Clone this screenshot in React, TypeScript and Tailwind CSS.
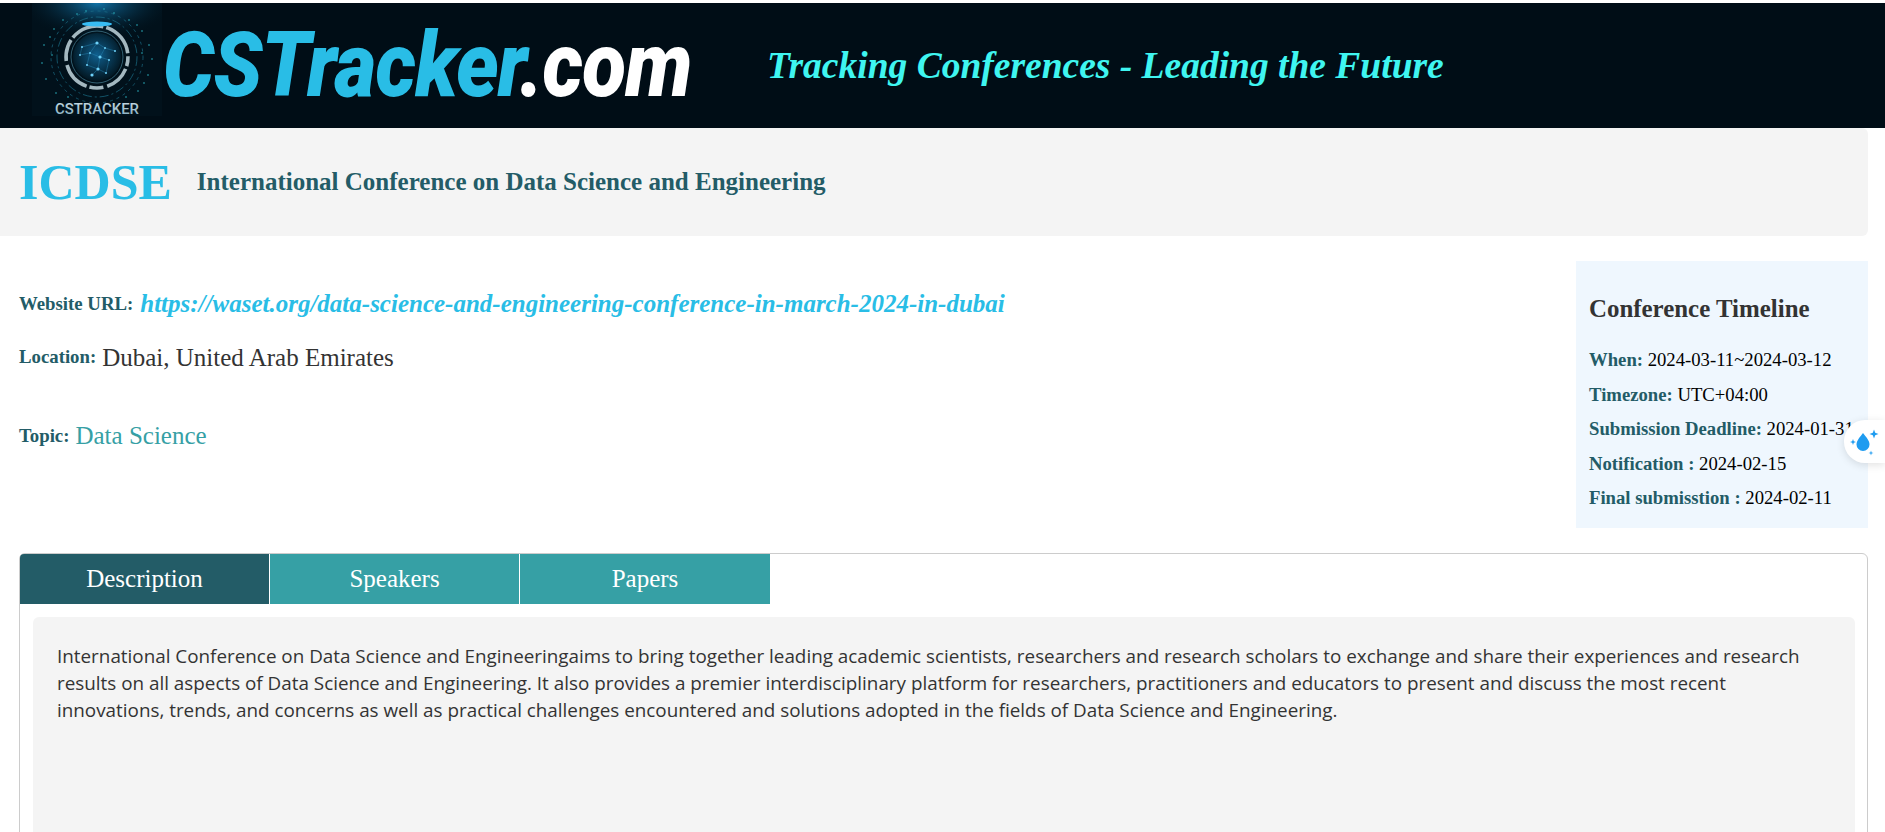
import React from "react";

const serif = "font-['Liberation_Serif',serif]";

const LogoMark = () => {
  const outerDots = [
    [22, 26], [31, 17], [45, 11], [82, 10], [97, 17], [110, 28], [117, 42], [12, 42], [10, 60], [14, 76], [24, 90], [106, 88], [116, 72], [120, 56],
    [18, 34], [105, 22], [112, 80], [20, 52], [110, 50], [36, 94], [94, 94], [54, 8], [72, 6],
  ];
  const nodes = [
    [65, 40], [73, 45], [58, 50], [68, 54], [77, 57], [55, 62], [66, 66], [48, 52], [83, 48], [60, 72], [74, 70], [50, 44],
  ];
  const links = [
    [0, 1], [0, 2], [2, 3], [1, 3], [3, 4], [2, 5], [3, 6], [5, 6], [2, 7], [1, 8], [6, 9], [6, 10], [4, 10], [7, 11], [0, 11],
  ];
  return (
    <svg width="130" height="113" viewBox="0 0 130 113" className="block shrink-0 overflow-visible">
      <defs>
        <radialGradient id="glow" cx="50%" cy="0%" r="60%">
          <stop offset="0%" stopColor="#1173a8" />
          <stop offset="100%" stopColor="#01121c" stopOpacity="0" />
        </radialGradient>
        <radialGradient id="globe" cx="50%" cy="45%" r="55%">
          <stop offset="0%" stopColor="#0f5f8e" />
          <stop offset="100%" stopColor="#021722" />
        </radialGradient>
        <linearGradient id="word" x1="0" y1="0" x2="0" y2="1">
          <stop offset="0%" stopColor="#c7dbe4" />
          <stop offset="100%" stopColor="#7fa8bb" />
        </linearGradient>
      </defs>
      <rect width="130" height="113" fill="#01111b" />
      <rect width="130" height="60" fill="url(#glow)" />
      <circle cx="65" cy="54" r="46" fill="none" stroke="#1b6d86" strokeWidth="0.7" strokeDasharray="3 4" />
      <circle cx="65" cy="54" r="40" fill="none" stroke="#1f7d99" strokeWidth="0.6" strokeDasharray="9 3 2 3" />
      <circle cx="65" cy="54" r="24" fill="url(#globe)" />
      {links.map(([a, b], i) => (
        <line key={i} x1={nodes[a][0]} y1={nodes[a][1]} x2={nodes[b][0]} y2={nodes[b][1]} stroke="#2a8fc0" strokeWidth="0.4" />
      ))}
      {nodes.map(([x, y], i) => (
        <circle key={i} cx={x} cy={y} r={i % 3 === 0 ? 1.6 : 1} fill="#6ed2fa" />
      ))}
      <circle cx="65" cy="54" r="26" fill="none" stroke="#3f7488" strokeWidth="0.8" />
      <circle cx="65" cy="54" r="31" fill="none" stroke="#a4b8c0" strokeWidth="3.6" strokeDasharray="34 3 10 3 26 4 14 3 30 4 22 3" transform="rotate(-70 65 54)" />
      <ellipse cx="65" cy="21" rx="15" ry="2.6" fill="#37bcf4" />
      {outerDots.map(([x, y], i) => (
        <circle key={i} cx={x} cy={y} r="0.8" fill="#2cb2bf" />
      ))}
      <text x="65" y="111" textAnchor="middle" fontFamily="Roboto, sans-serif" fontSize="14.5" fontWeight="500" fill="url(#word)" textLength="84" lengthAdjust="spacingAndGlyphs">
        CSTRACKER
      </text>
    </svg>
  );
};

const TimelineRow = ({ label, value }: { label: string; value: string }) => (
  <p className="mb-[11px] text-[18.7px] leading-[23.5px] whitespace-nowrap text-black">
    <b className="text-[#235c67]">{label}</b> {value}
  </p>
);

const Droplet = () => (
  <svg width="32" height="32" viewBox="0 0 32 32" fill="#1f9cf0">
    <path d="M15 7c3 4 6.500 7.500 6.500 11.500a6.500 6.500 0 0 1-13 0C8.500 14.500 12 11 15 7z" />
    <path d="M26 3.500l1.200 3.300 3.300 1.200-3.300 1.200L26 12.500l-1.200-3.300L21.500 8l3.300-1.200z" />
    <path d="M5 13l.8 2.200 2.200.8-2.200.8L5 19l-.8-2.200L2 16l2.200-.8z" />
    <path d="M23 24.500l.6 1.900 1.900.6-1.900.6-.6 1.900-.6-1.900-1.900-.6 1.900-.6z" />
  </svg>
);

export default function App() {
  return (
    <div className={`relative h-[832px] overflow-hidden bg-white pt-[3px] ${serif}`}>
      <header className="flex h-[125px] bg-[#000d16]">
        <div className="ml-[32px]">
          <LogoMark />
        </div>
        <div className="ml-[1px] flex w-[527px] items-center">
          <div className="origin-left scale-x-[0.895] font-['Roboto',sans-serif] text-[90px] leading-none font-black tracking-[-1px] whitespace-nowrap italic">
            <span className="text-[#29bde6]">CSTracker</span>
            <span className="text-white">.com</span>
          </div>
        </div>
        <div className="ml-[77px] flex items-center pt-[2px] text-[37.5px] font-bold whitespace-nowrap text-[#3ff5f0] italic">
          Tracking Conferences - Leading the Future
        </div>
      </header>

      <div className="mr-[17px] flex h-[108px] items-center gap-[25px] rounded-r-md bg-[#f4f4f4] pl-[19px]">
        <h1 className="text-[50px] font-bold text-[#29bde6]">ICDSE</h1>
        <h2 className="text-[25px] font-bold text-[#235c67]">International Conference on Data Science and Engineering</h2>
      </div>

      <div className="mt-[25px] mr-[17px] flex justify-between pl-[19px]">
        <div className="pt-[24px]">
          <p className="flex items-center gap-[7px] whitespace-nowrap">
            <b className="text-[18.8px] text-[#235c67]">Website URL:</b>
            <a className="text-[25px] font-bold text-[#29bde6] italic">https://waset.org/data-science-and-engineering-conference-in-march-2024-in-dubai</a>
          </p>
          <p className="mt-[16px] flex items-center gap-[6px]">
            <b className="text-[18.8px] text-[#235c67]">Location:</b>
            <span className="text-[25px] text-[#333333]">Dubai, United Arab Emirates</span>
          </p>
          <p className="mt-[41px] flex items-center gap-[6px]">
            <b className="text-[18.8px] text-[#235c67]">Topic:</b>
            <span className="text-[25px] text-[#36a0a5]">Data Science</span>
          </p>
        </div>
        <aside className="h-[267px] w-[292px] bg-[#eff7fe] pt-[29px] pl-[13px]">
          <h3 className="mb-[21px] text-[24.9px] font-bold text-[#333333]">Conference Timeline</h3>
          <TimelineRow label="When:" value="2024-03-11~2024-03-12" />
          <TimelineRow label="Timezone:" value="UTC+04:00" />
          <TimelineRow label="Submission Deadline:" value="2024-01-31" />
          <TimelineRow label="Notification :" value="2024-02-15" />
          <TimelineRow label="Final submisstion :" value="2024-02-11" />
        </aside>
      </div>

      <section className="mt-[25px] mr-[17px] ml-[19px] h-[400px] rounded-t-md border border-[#cccccc]">
        <div className="flex">
          <div className="flex h-[50px] w-[249px] items-center justify-center rounded-tl bg-[#235c67] text-[25px] text-white">Description</div>
          <div className="flex h-[50px] w-[250px] items-center justify-center border-l border-white bg-[#36a0a5] text-[25px] text-white">Speakers</div>
          <div className="flex h-[50px] w-[251px] items-center justify-center border-l border-white bg-[#36a0a5] text-[25px] text-white">Papers</div>
        </div>
        <div className="mt-[13px] mr-[12px] ml-[13px] h-[400px] rounded-md bg-[#f4f4f4] pt-[26px] pr-[50px] pl-[24px] font-['Open_Sans',sans-serif] text-[18.85px] leading-[27px] text-[#333333]">
          International Conference on Data Science and Engineeringaims to bring together leading academic scientists, researchers and research scholars to exchange and share their experiences and research results on all aspects of Data Science and Engineering. It also provides a premier interdisciplinary platform for researchers, practitioners and educators to present and discuss the most recent innovations, trends, and concerns as well as practical challenges encountered and solutions adopted in the fields of Data Science and Engineering.
        </div>
      </section>

      <div className="absolute top-[420px] right-0 flex h-[43px] w-[41px] items-center rounded-l-[21px] bg-white pl-[4px] shadow-[0_2px_8px_rgba(0,0,0,0.12)]">
        <Droplet />
      </div>
    </div>
  );
}
